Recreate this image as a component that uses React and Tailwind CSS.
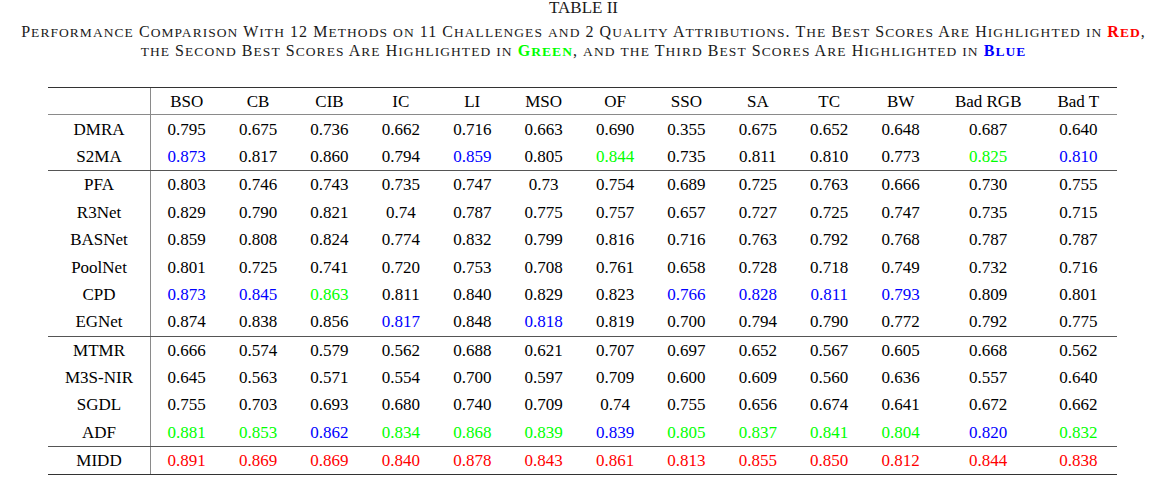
import React from "react";

const B = "b", G = "g", R = "r";

const headers = ["BSO", "CB", "CIB", "IC", "LI", "MSO", "OF", "SSO", "SA", "TC", "BW", "Bad RGB", "Bad T"];

const groups = [
  [
    ["DMRA", "0.795 0.675 0.736 0.662 0.716 0.663 0.690 0.355 0.675 0.652 0.648 0.687 0.640", {}],
    ["S2MA", "0.873 0.817 0.860 0.794 0.859 0.805 0.844 0.735 0.811 0.810 0.773 0.825 0.810", { 0: B, 4: B, 6: G, 11: G, 12: B }],
  ],
  [
    ["PFA", "0.803 0.746 0.743 0.735 0.747 0.73 0.754 0.689 0.725 0.763 0.666 0.730 0.755", {}],
    ["R3Net", "0.829 0.790 0.821 0.74 0.787 0.775 0.757 0.657 0.727 0.725 0.747 0.735 0.715", {}],
    ["BASNet", "0.859 0.808 0.824 0.774 0.832 0.799 0.816 0.716 0.763 0.792 0.768 0.787 0.787", {}],
    ["PoolNet", "0.801 0.725 0.741 0.720 0.753 0.708 0.761 0.658 0.728 0.718 0.749 0.732 0.716", {}],
    ["CPD", "0.873 0.845 0.863 0.811 0.840 0.829 0.823 0.766 0.828 0.811 0.793 0.809 0.801", { 0: B, 1: B, 2: G, 7: B, 8: B, 9: B, 10: B }],
    ["EGNet", "0.874 0.838 0.856 0.817 0.848 0.818 0.819 0.700 0.794 0.790 0.772 0.792 0.775", { 3: B, 5: B }],
  ],
  [
    ["MTMR", "0.666 0.574 0.579 0.562 0.688 0.621 0.707 0.697 0.652 0.567 0.605 0.668 0.562", {}],
    ["M3S-NIR", "0.645 0.563 0.571 0.554 0.700 0.597 0.709 0.600 0.609 0.560 0.636 0.557 0.640", {}],
    ["SGDL", "0.755 0.703 0.693 0.680 0.740 0.709 0.74 0.755 0.656 0.674 0.641 0.672 0.662", {}],
    ["ADF", "0.881 0.853 0.862 0.834 0.868 0.839 0.839 0.805 0.837 0.841 0.804 0.820 0.832", { 0: G, 1: G, 2: B, 3: G, 4: G, 5: G, 6: B, 7: G, 8: G, 9: G, 10: G, 11: B, 12: G }],
  ],
  [
    ["MIDD", "0.891 0.869 0.869 0.840 0.878 0.843 0.861 0.813 0.855 0.850 0.812 0.844 0.838", { 0: R, 1: R, 2: R, 3: R, 4: R, 5: R, 6: R, 7: R, 8: R, 9: R, 10: R, 11: R, 12: R }],
  ],
];

const colorClass = {
  b: "text-[#0000ff]",
  g: "text-[#00ff00]",
  r: "text-[#ff0000]",
};

function SC({ text }) {
  const parts = text.match(/[a-z]+|[^a-z]+/g) || [];
  return parts.map((p, i) =>
    /^[a-z]+$/.test(p) ? (
      <span key={i} className="text-[13.5px] uppercase">
        {p}
      </span>
    ) : (
      <span key={i}>{p}</span>
    )
  );
}

const gridCls = "grid grid-cols-[103px_repeat(11,71.4px)_103.8px_76.5px] h-[27.4px]";

function Row({ name, values, colors }) {
  return (
    <div className={gridCls}>
      <div className="flex items-center justify-center border-r border-[#8a8a8a]">{name}</div>
      {values.split(" ").map((v, i) => (
        <div key={i} className={"flex items-center justify-center " + (colors[i] ? colorClass[colors[i]] : "")}>
          {v}
        </div>
      ))}
    </div>
  );
}

export default function App() {
  return (
    <div
      className="w-[1167px] h-[491px] bg-white text-black flex flex-col"
      style={{ fontFamily: '"Liberation Serif", "Times New Roman", serif' }}
    >
      <div className="text-[17px] leading-[16px] text-center text-[#1a1a1a]">TABLE II</div>
      <div className="mt-[7px] h-[37px] text-[16px] leading-[18.4px] tracking-[1.05px] text-center text-[#1a1a1a] whitespace-nowrap">
        <SC text="Performance Comparison With 12 Methods on 11 Challenges and 2 Quality Attributions. The Best Scores Are Highlighted in " />
        <span className="font-bold text-[#ff0000]">
          <SC text="Red" />
        </span>
        ,
        <br />
        <SC text="the Second Best Scores Are Highlighted in " />
        <span className="font-bold text-[#00ff00]">
          <SC text="Green" />
        </span>
        <SC text=", and the Third Best Scores Are Highlighted in " />
        <span className="font-bold text-[#0000ff]">
          <SC text="Blue" />
        </span>
      </div>
      <div className="ml-[48px] mt-[27px] w-[1068.7px] text-[17px] leading-[19px] border-t border-b border-[#333333]">
        <div className={gridCls + " border-b border-[#8a8a8a]"}>
          <div className="border-r border-[#8a8a8a]"></div>
          {headers.map((h) => (
            <div key={h} className="flex items-center justify-center">
              {h}
            </div>
          ))}
        </div>
        {groups.map((g, gi) => (
          <div key={gi} className={gi < groups.length - 1 ? "border-b border-[#555555]" : ""}>
            {g.map(([name, values, colors]) => (
              <Row key={name} name={name} values={values} colors={colors} />
            ))}
          </div>
        ))}
      </div>
    </div>
  );
}
